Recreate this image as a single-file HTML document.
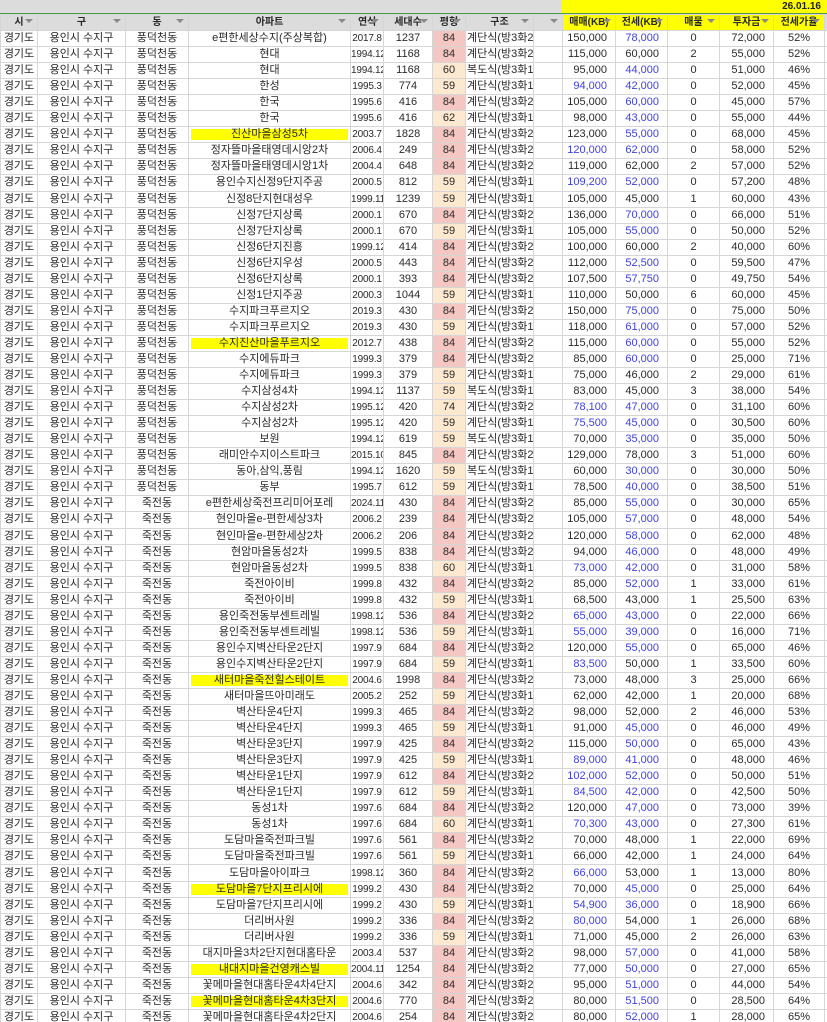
<!DOCTYPE html>
<html><head><meta charset="utf-8">
<style>
html,body{margin:0;padding:0;background:#fff;width:827px;height:1022px;overflow:hidden}
body{font-family:"Liberation Sans","Noto Sans CJK KR","NanumGothic",sans-serif;font-size:11px;color:#2a2a2a;position:relative}
#top{position:absolute;left:0;top:0;width:827px;height:13px;background:#dcdcdc;border-bottom:1px solid #4d9a4d}
#topy{position:absolute;left:562px;top:0;width:265px;height:13px;background:#ffff00;text-align:right;font-size:10px;line-height:13px;font-weight:bold;box-sizing:border-box;padding-right:6px;color:#222}
table{position:absolute;left:0;top:14px;border-collapse:collapse;table-layout:fixed;width:827px}
td{border:1px solid #d6d6d6;padding:0 1px;height:15px;line-height:15px;white-space:nowrap;overflow:hidden;text-align:center;font-size:11px}
td:nth-child(5){font-size:10px;padding:0;letter-spacing:-0.2px}
tr{height:16.05px}
tr.h td{background:#dcdcdc;font-weight:bold;font-size:10px;height:12px;line-height:12px;position:relative}
tr.h td.hy{background:#ffff00}
.ar::after{content:"";position:absolute;right:4px;top:4px;border-left:4px solid transparent;border-right:4px solid transparent;border-top:4px solid #888}
td.p{background:#f4c7c3}
td.o{background:#fde9cf}
td.y{background:#ffff00;box-shadow:inset 0 0 0 2px #fff}
td.r{text-align:right;padding-right:8px}
td.b{color:#4040e0}
td.l{text-align:left}
</style></head><body>
<div id="top"></div><div id="topy">26.01.16</div>
<table>
<colgroup><col style="width:37px"><col style="width:88px"><col style="width:63px"><col style="width:162px"><col style="width:33px"><col style="width:49px"><col style="width:33px"><col style="width:68px"><col style="width:29px"><col style="width:53px"><col style="width:52px"><col style="width:52px"><col style="width:54px"><col style="width:51px"><col style="width:4px"></colgroup>
<tr class="h"><td class="ar">시</td><td class="ar">구</td><td class="ar">동</td><td class="ar">아파트</td><td class="ar">연식</td><td class="ar">세대수</td><td class="p ar">평형</td><td class="ar">구조</td><td class="ar"></td><td class="hy ar">매매(KB)</td><td class="hy ar">전세(KB)</td><td class="hy ar">매물</td><td class="hy ar">투자금</td><td class="hy ar">전세가율</td><td></td></tr>
<tr><td>경기도</td><td>용인시 수지구</td><td>풍덕천동</td><td>e편한세상수지(주상복합)</td><td>2017.8</td><td>1237</td><td class="p">84</td><td class="l">계단식(방3화2</td><td></td><td class="r">150,000</td><td class="r b">78,000</td><td>0</td><td class="r">72,000</td><td>52%</td><td></td></tr>
<tr><td>경기도</td><td>용인시 수지구</td><td>풍덕천동</td><td>현대</td><td>1994.12</td><td>1168</td><td class="p">84</td><td class="l">계단식(방3화2</td><td></td><td class="r">115,000</td><td class="r">60,000</td><td>2</td><td class="r">55,000</td><td>52%</td><td></td></tr>
<tr><td>경기도</td><td>용인시 수지구</td><td>풍덕천동</td><td>현대</td><td>1994.12</td><td>1168</td><td class="o">60</td><td class="l">복도식(방3화1</td><td></td><td class="r">95,000</td><td class="r b">44,000</td><td>0</td><td class="r">51,000</td><td>46%</td><td></td></tr>
<tr><td>경기도</td><td>용인시 수지구</td><td>풍덕천동</td><td>한성</td><td>1995.3</td><td>774</td><td class="o">59</td><td class="l">계단식(방3화1</td><td></td><td class="r b">94,000</td><td class="r b">42,000</td><td>0</td><td class="r">52,000</td><td>45%</td><td></td></tr>
<tr><td>경기도</td><td>용인시 수지구</td><td>풍덕천동</td><td>한국</td><td>1995.6</td><td>416</td><td class="p">84</td><td class="l">계단식(방3화2</td><td></td><td class="r">105,000</td><td class="r b">60,000</td><td>0</td><td class="r">45,000</td><td>57%</td><td></td></tr>
<tr><td>경기도</td><td>용인시 수지구</td><td>풍덕천동</td><td>한국</td><td>1995.6</td><td>416</td><td class="o">62</td><td class="l">계단식(방3화1</td><td></td><td class="r">98,000</td><td class="r b">43,000</td><td>0</td><td class="r">55,000</td><td>44%</td><td></td></tr>
<tr><td>경기도</td><td>용인시 수지구</td><td>풍덕천동</td><td class="y">진산마을삼성5차</td><td>2003.7</td><td>1828</td><td class="p">84</td><td class="l">계단식(방3화2</td><td></td><td class="r">123,000</td><td class="r b">55,000</td><td>0</td><td class="r">68,000</td><td>45%</td><td></td></tr>
<tr><td>경기도</td><td>용인시 수지구</td><td>풍덕천동</td><td>정자뜰마을태영데시앙2차</td><td>2006.4</td><td>249</td><td class="p">84</td><td class="l">계단식(방3화2</td><td></td><td class="r b">120,000</td><td class="r b">62,000</td><td>0</td><td class="r">58,000</td><td>52%</td><td></td></tr>
<tr><td>경기도</td><td>용인시 수지구</td><td>풍덕천동</td><td>정자뜰마을태영데시앙1차</td><td>2004.4</td><td>648</td><td class="p">84</td><td class="l">계단식(방3화2</td><td></td><td class="r">119,000</td><td class="r">62,000</td><td>2</td><td class="r">57,000</td><td>52%</td><td></td></tr>
<tr><td>경기도</td><td>용인시 수지구</td><td>풍덕천동</td><td>용인수지신정9단지주공</td><td>2000.5</td><td>812</td><td class="o">59</td><td class="l">계단식(방3화1</td><td></td><td class="r b">109,200</td><td class="r b">52,000</td><td>0</td><td class="r">57,200</td><td>48%</td><td></td></tr>
<tr><td>경기도</td><td>용인시 수지구</td><td>풍덕천동</td><td>신정8단지현대성우</td><td>1999.11</td><td>1239</td><td class="o">59</td><td class="l">계단식(방3화1</td><td></td><td class="r">105,000</td><td class="r">45,000</td><td>1</td><td class="r">60,000</td><td>43%</td><td></td></tr>
<tr><td>경기도</td><td>용인시 수지구</td><td>풍덕천동</td><td>신정7단지상록</td><td>2000.1</td><td>670</td><td class="p">84</td><td class="l">계단식(방3화2</td><td></td><td class="r">136,000</td><td class="r b">70,000</td><td>0</td><td class="r">66,000</td><td>51%</td><td></td></tr>
<tr><td>경기도</td><td>용인시 수지구</td><td>풍덕천동</td><td>신정7단지상록</td><td>2000.1</td><td>670</td><td class="o">59</td><td class="l">계단식(방3화1</td><td></td><td class="r">105,000</td><td class="r b">55,000</td><td>0</td><td class="r">50,000</td><td>52%</td><td></td></tr>
<tr><td>경기도</td><td>용인시 수지구</td><td>풍덕천동</td><td>신정6단지진흥</td><td>1999.12</td><td>414</td><td class="p">84</td><td class="l">계단식(방3화2</td><td></td><td class="r">100,000</td><td class="r">60,000</td><td>2</td><td class="r">40,000</td><td>60%</td><td></td></tr>
<tr><td>경기도</td><td>용인시 수지구</td><td>풍덕천동</td><td>신정6단지우성</td><td>2000.5</td><td>443</td><td class="p">84</td><td class="l">계단식(방3화2</td><td></td><td class="r">112,000</td><td class="r b">52,500</td><td>0</td><td class="r">59,500</td><td>47%</td><td></td></tr>
<tr><td>경기도</td><td>용인시 수지구</td><td>풍덕천동</td><td>신정6단지상록</td><td>2000.1</td><td>393</td><td class="p">84</td><td class="l">계단식(방3화2</td><td></td><td class="r">107,500</td><td class="r b">57,750</td><td>0</td><td class="r">49,750</td><td>54%</td><td></td></tr>
<tr><td>경기도</td><td>용인시 수지구</td><td>풍덕천동</td><td>신정1단지주공</td><td>2000.3</td><td>1044</td><td class="o">59</td><td class="l">계단식(방3화1</td><td></td><td class="r">110,000</td><td class="r">50,000</td><td>6</td><td class="r">60,000</td><td>45%</td><td></td></tr>
<tr><td>경기도</td><td>용인시 수지구</td><td>풍덕천동</td><td>수지파크푸르지오</td><td>2019.3</td><td>430</td><td class="p">84</td><td class="l">계단식(방3화2</td><td></td><td class="r">150,000</td><td class="r b">75,000</td><td>0</td><td class="r">75,000</td><td>50%</td><td></td></tr>
<tr><td>경기도</td><td>용인시 수지구</td><td>풍덕천동</td><td>수지파크푸르지오</td><td>2019.3</td><td>430</td><td class="o">59</td><td class="l">계단식(방3화1</td><td></td><td class="r">118,000</td><td class="r b">61,000</td><td>0</td><td class="r">57,000</td><td>52%</td><td></td></tr>
<tr><td>경기도</td><td>용인시 수지구</td><td>풍덕천동</td><td class="y">수지진산마을푸르지오</td><td>2012.7</td><td>438</td><td class="p">84</td><td class="l">계단식(방3화2</td><td></td><td class="r">115,000</td><td class="r b">60,000</td><td>0</td><td class="r">55,000</td><td>52%</td><td></td></tr>
<tr><td>경기도</td><td>용인시 수지구</td><td>풍덕천동</td><td>수지에듀파크</td><td>1999.3</td><td>379</td><td class="p">84</td><td class="l">계단식(방3화2</td><td></td><td class="r">85,000</td><td class="r b">60,000</td><td>0</td><td class="r">25,000</td><td>71%</td><td></td></tr>
<tr><td>경기도</td><td>용인시 수지구</td><td>풍덕천동</td><td>수지에듀파크</td><td>1999.3</td><td>379</td><td class="o">59</td><td class="l">계단식(방3화1</td><td></td><td class="r">75,000</td><td class="r">46,000</td><td>2</td><td class="r">29,000</td><td>61%</td><td></td></tr>
<tr><td>경기도</td><td>용인시 수지구</td><td>풍덕천동</td><td>수지삼성4차</td><td>1994.12</td><td>1137</td><td class="o">59</td><td class="l">복도식(방3화1</td><td></td><td class="r">83,000</td><td class="r">45,000</td><td>3</td><td class="r">38,000</td><td>54%</td><td></td></tr>
<tr><td>경기도</td><td>용인시 수지구</td><td>풍덕천동</td><td>수지삼성2차</td><td>1995.12</td><td>420</td><td class="o">74</td><td class="l">계단식(방3화2</td><td></td><td class="r b">78,100</td><td class="r b">47,000</td><td>0</td><td class="r">31,100</td><td>60%</td><td></td></tr>
<tr><td>경기도</td><td>용인시 수지구</td><td>풍덕천동</td><td>수지삼성2차</td><td>1995.12</td><td>420</td><td class="o">59</td><td class="l">계단식(방3화1</td><td></td><td class="r b">75,500</td><td class="r b">45,000</td><td>0</td><td class="r">30,500</td><td>60%</td><td></td></tr>
<tr><td>경기도</td><td>용인시 수지구</td><td>풍덕천동</td><td>보원</td><td>1994.12</td><td>619</td><td class="o">59</td><td class="l">복도식(방3화1</td><td></td><td class="r">70,000</td><td class="r b">35,000</td><td>0</td><td class="r">35,000</td><td>50%</td><td></td></tr>
<tr><td>경기도</td><td>용인시 수지구</td><td>풍덕천동</td><td>래미안수지이스트파크</td><td>2015.10</td><td>845</td><td class="p">84</td><td class="l">계단식(방3화2</td><td></td><td class="r">129,000</td><td class="r">78,000</td><td>3</td><td class="r">51,000</td><td>60%</td><td></td></tr>
<tr><td>경기도</td><td>용인시 수지구</td><td>풍덕천동</td><td>동아,삼익,풍림</td><td>1994.12</td><td>1620</td><td class="o">59</td><td class="l">복도식(방3화1</td><td></td><td class="r">60,000</td><td class="r b">30,000</td><td>0</td><td class="r">30,000</td><td>50%</td><td></td></tr>
<tr><td>경기도</td><td>용인시 수지구</td><td>풍덕천동</td><td>동부</td><td>1995.7</td><td>612</td><td class="o">59</td><td class="l">계단식(방3화1</td><td></td><td class="r">78,500</td><td class="r b">40,000</td><td>0</td><td class="r">38,500</td><td>51%</td><td></td></tr>
<tr><td>경기도</td><td>용인시 수지구</td><td>죽전동</td><td>e편한세상죽전프리미어포레</td><td>2024.11</td><td>430</td><td class="p">84</td><td class="l">계단식(방3화2</td><td></td><td class="r">85,000</td><td class="r b">55,000</td><td>0</td><td class="r">30,000</td><td>65%</td><td></td></tr>
<tr><td>경기도</td><td>용인시 수지구</td><td>죽전동</td><td>현인마을e-편한세상3차</td><td>2006.2</td><td>239</td><td class="p">84</td><td class="l">계단식(방3화2</td><td></td><td class="r">105,000</td><td class="r b">57,000</td><td>0</td><td class="r">48,000</td><td>54%</td><td></td></tr>
<tr><td>경기도</td><td>용인시 수지구</td><td>죽전동</td><td>현인마을e-편한세상2차</td><td>2006.2</td><td>206</td><td class="p">84</td><td class="l">계단식(방3화2</td><td></td><td class="r">120,000</td><td class="r b">58,000</td><td>0</td><td class="r">62,000</td><td>48%</td><td></td></tr>
<tr><td>경기도</td><td>용인시 수지구</td><td>죽전동</td><td>현암마을동성2차</td><td>1999.5</td><td>838</td><td class="p">84</td><td class="l">계단식(방3화2</td><td></td><td class="r">94,000</td><td class="r b">46,000</td><td>0</td><td class="r">48,000</td><td>49%</td><td></td></tr>
<tr><td>경기도</td><td>용인시 수지구</td><td>죽전동</td><td>현암마을동성2차</td><td>1999.5</td><td>838</td><td class="o">60</td><td class="l">계단식(방3화1</td><td></td><td class="r b">73,000</td><td class="r b">42,000</td><td>0</td><td class="r">31,000</td><td>58%</td><td></td></tr>
<tr><td>경기도</td><td>용인시 수지구</td><td>죽전동</td><td>죽전아이비</td><td>1999.8</td><td>432</td><td class="p">84</td><td class="l">계단식(방3화2</td><td></td><td class="r">85,000</td><td class="r b">52,000</td><td>1</td><td class="r">33,000</td><td>61%</td><td></td></tr>
<tr><td>경기도</td><td>용인시 수지구</td><td>죽전동</td><td>죽전아이비</td><td>1999.8</td><td>432</td><td class="o">59</td><td class="l">계단식(방3화1</td><td></td><td class="r">68,500</td><td class="r">43,000</td><td>1</td><td class="r">25,500</td><td>63%</td><td></td></tr>
<tr><td>경기도</td><td>용인시 수지구</td><td>죽전동</td><td>용인죽전동부센트레빌</td><td>1998.12</td><td>536</td><td class="p">84</td><td class="l">계단식(방3화2</td><td></td><td class="r b">65,000</td><td class="r b">43,000</td><td>0</td><td class="r">22,000</td><td>66%</td><td></td></tr>
<tr><td>경기도</td><td>용인시 수지구</td><td>죽전동</td><td>용인죽전동부센트레빌</td><td>1998.12</td><td>536</td><td class="o">59</td><td class="l">계단식(방3화1</td><td></td><td class="r b">55,000</td><td class="r b">39,000</td><td>0</td><td class="r">16,000</td><td>71%</td><td></td></tr>
<tr><td>경기도</td><td>용인시 수지구</td><td>죽전동</td><td>용인수지벽산타운2단지</td><td>1997.9</td><td>684</td><td class="p">84</td><td class="l">계단식(방3화2</td><td></td><td class="r">120,000</td><td class="r b">55,000</td><td>0</td><td class="r">65,000</td><td>46%</td><td></td></tr>
<tr><td>경기도</td><td>용인시 수지구</td><td>죽전동</td><td>용인수지벽산타운2단지</td><td>1997.9</td><td>684</td><td class="o">59</td><td class="l">계단식(방3화1</td><td></td><td class="r b">83,500</td><td class="r">50,000</td><td>1</td><td class="r">33,500</td><td>60%</td><td></td></tr>
<tr><td>경기도</td><td>용인시 수지구</td><td>죽전동</td><td class="y">새터마을죽전힐스테이트</td><td>2004.6</td><td>1998</td><td class="p">84</td><td class="l">계단식(방3화2</td><td></td><td class="r">73,000</td><td class="r">48,000</td><td>3</td><td class="r">25,000</td><td>66%</td><td></td></tr>
<tr><td>경기도</td><td>용인시 수지구</td><td>죽전동</td><td>새터마을뜨아미래도</td><td>2005.2</td><td>252</td><td class="o">59</td><td class="l">계단식(방3화1</td><td></td><td class="r">62,000</td><td class="r">42,000</td><td>1</td><td class="r">20,000</td><td>68%</td><td></td></tr>
<tr><td>경기도</td><td>용인시 수지구</td><td>죽전동</td><td>벽산타운4단지</td><td>1999.3</td><td>465</td><td class="p">84</td><td class="l">계단식(방3화2</td><td></td><td class="r">98,000</td><td class="r">52,000</td><td>2</td><td class="r">46,000</td><td>53%</td><td></td></tr>
<tr><td>경기도</td><td>용인시 수지구</td><td>죽전동</td><td>벽산타운4단지</td><td>1999.3</td><td>465</td><td class="o">59</td><td class="l">계단식(방3화1</td><td></td><td class="r">91,000</td><td class="r b">45,000</td><td>0</td><td class="r">46,000</td><td>49%</td><td></td></tr>
<tr><td>경기도</td><td>용인시 수지구</td><td>죽전동</td><td>벽산타운3단지</td><td>1997.9</td><td>425</td><td class="p">84</td><td class="l">계단식(방3화2</td><td></td><td class="r">115,000</td><td class="r b">50,000</td><td>0</td><td class="r">65,000</td><td>43%</td><td></td></tr>
<tr><td>경기도</td><td>용인시 수지구</td><td>죽전동</td><td>벽산타운3단지</td><td>1997.9</td><td>425</td><td class="o">59</td><td class="l">계단식(방3화1</td><td></td><td class="r b">89,000</td><td class="r b">41,000</td><td>0</td><td class="r">48,000</td><td>46%</td><td></td></tr>
<tr><td>경기도</td><td>용인시 수지구</td><td>죽전동</td><td>벽산타운1단지</td><td>1997.9</td><td>612</td><td class="p">84</td><td class="l">계단식(방3화2</td><td></td><td class="r b">102,000</td><td class="r b">52,000</td><td>0</td><td class="r">50,000</td><td>51%</td><td></td></tr>
<tr><td>경기도</td><td>용인시 수지구</td><td>죽전동</td><td>벽산타운1단지</td><td>1997.9</td><td>612</td><td class="o">59</td><td class="l">계단식(방3화1</td><td></td><td class="r b">84,500</td><td class="r b">42,000</td><td>0</td><td class="r">42,500</td><td>50%</td><td></td></tr>
<tr><td>경기도</td><td>용인시 수지구</td><td>죽전동</td><td>동성1차</td><td>1997.6</td><td>684</td><td class="p">84</td><td class="l">계단식(방3화2</td><td></td><td class="r">120,000</td><td class="r b">47,000</td><td>0</td><td class="r">73,000</td><td>39%</td><td></td></tr>
<tr><td>경기도</td><td>용인시 수지구</td><td>죽전동</td><td>동성1차</td><td>1997.6</td><td>684</td><td class="o">60</td><td class="l">계단식(방3화1</td><td></td><td class="r b">70,300</td><td class="r b">43,000</td><td>0</td><td class="r">27,300</td><td>61%</td><td></td></tr>
<tr><td>경기도</td><td>용인시 수지구</td><td>죽전동</td><td>도담마을죽전파크빌</td><td>1997.6</td><td>561</td><td class="p">84</td><td class="l">계단식(방3화2</td><td></td><td class="r">70,000</td><td class="r">48,000</td><td>1</td><td class="r">22,000</td><td>69%</td><td></td></tr>
<tr><td>경기도</td><td>용인시 수지구</td><td>죽전동</td><td>도담마을죽전파크빌</td><td>1997.6</td><td>561</td><td class="o">59</td><td class="l">계단식(방3화1</td><td></td><td class="r">66,000</td><td class="r">42,000</td><td>1</td><td class="r">24,000</td><td>64%</td><td></td></tr>
<tr><td>경기도</td><td>용인시 수지구</td><td>죽전동</td><td>도담마을아이파크</td><td>1998.12</td><td>360</td><td class="p">84</td><td class="l">계단식(방3화2</td><td></td><td class="r b">66,000</td><td class="r">53,000</td><td>1</td><td class="r">13,000</td><td>80%</td><td></td></tr>
<tr><td>경기도</td><td>용인시 수지구</td><td>죽전동</td><td class="y">도담마을7단지프리시에</td><td>1999.2</td><td>430</td><td class="p">84</td><td class="l">계단식(방3화2</td><td></td><td class="r">70,000</td><td class="r b">45,000</td><td>0</td><td class="r">25,000</td><td>64%</td><td></td></tr>
<tr><td>경기도</td><td>용인시 수지구</td><td>죽전동</td><td>도담마을7단지프리시에</td><td>1999.2</td><td>430</td><td class="o">59</td><td class="l">계단식(방3화1</td><td></td><td class="r b">54,900</td><td class="r b">36,000</td><td>0</td><td class="r">18,900</td><td>66%</td><td></td></tr>
<tr><td>경기도</td><td>용인시 수지구</td><td>죽전동</td><td>더리버사원</td><td>1999.2</td><td>336</td><td class="p">84</td><td class="l">계단식(방3화2</td><td></td><td class="r b">80,000</td><td class="r">54,000</td><td>1</td><td class="r">26,000</td><td>68%</td><td></td></tr>
<tr><td>경기도</td><td>용인시 수지구</td><td>죽전동</td><td>더리버사원</td><td>1999.2</td><td>336</td><td class="o">59</td><td class="l">계단식(방3화1</td><td></td><td class="r">71,000</td><td class="r">45,000</td><td>2</td><td class="r">26,000</td><td>63%</td><td></td></tr>
<tr><td>경기도</td><td>용인시 수지구</td><td>죽전동</td><td>대지마을3차2단지현대홈타운</td><td>2003.4</td><td>537</td><td class="p">84</td><td class="l">계단식(방3화2</td><td></td><td class="r">98,000</td><td class="r b">57,000</td><td>0</td><td class="r">41,000</td><td>58%</td><td></td></tr>
<tr><td>경기도</td><td>용인시 수지구</td><td>죽전동</td><td class="y">내대지마을건영캐스빌</td><td>2004.11</td><td>1254</td><td class="p">84</td><td class="l">계단식(방3화2</td><td></td><td class="r">77,000</td><td class="r b">50,000</td><td>0</td><td class="r">27,000</td><td>65%</td><td></td></tr>
<tr><td>경기도</td><td>용인시 수지구</td><td>죽전동</td><td>꽃메마을현대홈타운4차4단지</td><td>2004.6</td><td>342</td><td class="p">84</td><td class="l">계단식(방3화2</td><td></td><td class="r">95,000</td><td class="r b">51,000</td><td>0</td><td class="r">44,000</td><td>54%</td><td></td></tr>
<tr><td>경기도</td><td>용인시 수지구</td><td>죽전동</td><td class="y">꽃메마을현대홈타운4차3단지</td><td>2004.6</td><td>770</td><td class="p">84</td><td class="l">계단식(방3화2</td><td></td><td class="r">80,000</td><td class="r b">51,500</td><td>0</td><td class="r">28,500</td><td>64%</td><td></td></tr>
<tr><td>경기도</td><td>용인시 수지구</td><td>죽전동</td><td>꽃메마을현대홈타운4차2단지</td><td>2004.6</td><td>254</td><td class="p">84</td><td class="l">계단식(방3화2</td><td></td><td class="r">80,000</td><td class="r b">52,000</td><td>1</td><td class="r">28,000</td><td>65%</td><td></td></tr>
</table>
</body></html>
